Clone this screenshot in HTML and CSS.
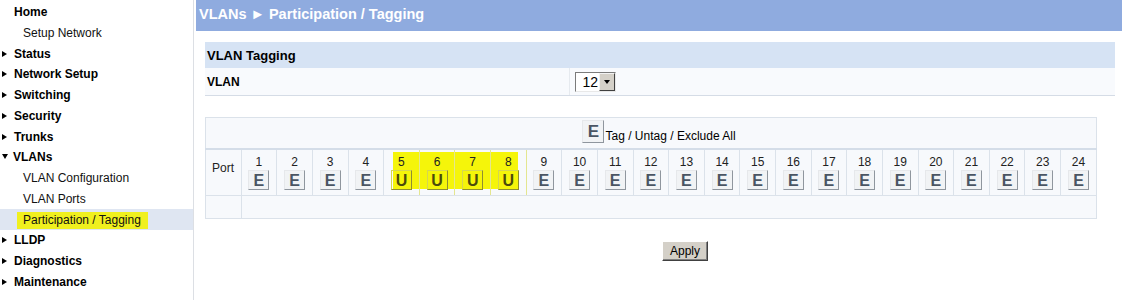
FILE: index.html
```html
<!DOCTYPE html>
<html lang="en">
<head>
  <meta charset="UTF-8" />
  <title>VLANs - Participation / Tagging</title>
  <link rel="stylesheet" href="styles.css">
</head>
<body>
  <div class="page">
    <div class="sidebar">
      <ul class="menu">
        <li class="top">Home</li>
        <li class="sub">Setup Network</li>
        <li class="top arrow">Status</li>
        <li class="top arrow">Network Setup</li>
        <li class="top arrow">Switching</li>
        <li class="top arrow">Security</li>
        <li class="top arrow">Trunks</li>
        <li class="top arrow open">VLANs</li>
        <li class="sub">VLAN Configuration</li>
        <li class="sub">VLAN Ports</li>
        <li class="sub current"><span class="marker">Participation / Tagging</span></li>
        <li class="top arrow">LLDP</li>
        <li class="top arrow">Diagnostics</li>
        <li class="top arrow">Maintenance</li>
      </ul>
    </div>
    <div class="main">
      <div class="titlebar">VLANs &#9658; Participation / Tagging</div>
      <div class="content">
        <table class="box">
          <tr><th colspan="2">VLAN Tagging</th></tr>
          <tr>
            <td class="label">VLAN</td>
            <td><span class="select"><span class="val">12</span><span class="drop"></span></span></td>
          </tr>
        </table>

        <table class="ports">
          <tr class="all">
            <td colspan="25"><span class="tb big">E</span> Tag / Untag / Exclude All</td>
          </tr>
          <tr class="row" id="portRow">
            <td class="port-label">Port</td>
          </tr>
          <tr class="empty"><td></td><td colspan="24"></td></tr>
        </table>

        <div class="actions"><button class="apply">Apply</button></div>
      </div>
    </div>
  </div>

  <script>
  const row = document.getElementById('portRow');
  for (let i = 1; i <= 24; i++) {
    const td = document.createElement('td');
    const untagged = i >= 5 && i <= 8;
    td.className = 'port' + (untagged ? ' hl' : '') + (i === 5 ? ' hl-first' : '') + (i === 8 ? ' hl-last' : '');
    td.innerHTML = `<div class="num">${i}</div><span class="tb${untagged ? ' u' : ''}">${untagged ? 'U' : 'E'}</span>`;
    row.appendChild(td);
  }
  </script>
</body>
</html>
```

FILE: styles.css
```css
body { margin: 0; font-family: "Liberation Sans", Arial, sans-serif; font-size: 12px; color: #000; background: #fff; }
.page { display: flex; min-height: 300px; }

.sidebar { width: 193px; flex: none; border-right: 1px solid #dcdfe4; }
.menu { list-style: none; margin: 0; padding: 2px 0 0; }
.menu li { height: 20.75px; line-height: 20.75px; white-space: nowrap; }
.menu .top { font-weight: bold; padding-left: 14px; }
.menu .sub { padding-left: 23px; color: #111; }
.menu .arrow { padding-left: 2px; }
.menu .arrow::before {
  content: "";
  display: inline-block;
  width: 0;
  height: 0;
  margin-right: 7px;
  vertical-align: 1px;
  border-left: 5px solid #000;
  border-top: 3.5px solid transparent;
  border-bottom: 3.5px solid transparent;
}
.menu .open::before {
  border-left: 3.5px solid transparent;
  border-right: 3.5px solid transparent;
  border-top: 5px solid #000;
  border-bottom: 0;
  margin-right: 5px;
  vertical-align: 2px;
}
.menu .current { background: #dfe6f2; margin-top: -1px; padding-top: 1px; }
.marker { display: inline-block; height: 17px; line-height: 17px; padding: 0 7px 0 6px; margin-left: -6px; background: #f0f01e; vertical-align: middle; }

.main { flex: 1; }
.titlebar { margin-left: 2px; height: 31px; line-height: 29px; padding-left: 3px; background: #8fabdf; color: #fff; font-weight: bold; font-size: 14.5px; }
.content { padding: 11px 0 0 11px; }

.box { width: 910px; border-collapse: collapse; }
.box th { height: 26px; padding: 0 2px; text-align: left; font-size: 13px; background: #d6e3f4; }
.box td { height: 27px; padding: 0 2px; background: #f8fafd; border-bottom: 1px solid #d5dce6; }
.box .label { width: 360px; font-weight: bold; border-right: 1px solid #e6eaef; }

.select { display: inline-flex; height: 18px; margin-left: 3px; vertical-align: middle; border: 1px solid; border-color: #7b7b7b #e8e8e8 #e8e8e8 #7b7b7b; background: #fff; }
.select .val { width: 22px; padding-right: 1px; text-align: right; font-size: 14px; line-height: 18px; }
.select .drop { width: 14px; display: flex; align-items: center; justify-content: center; background: #d4d0c8; border: 1px solid; border-color: #f2f2f2 #404040 #404040 #f2f2f2; }
.select .drop::after { content: ""; border-top: 4px solid #000; border-left: 3.5px solid transparent; border-right: 3.5px solid transparent; }

.ports { width: 892px; margin-top: 21px; border-collapse: collapse; table-layout: fixed; }
.ports td { border: 1px solid #dbe2ea; background: #f7f9fc; text-align: center; padding: 0; }
.ports .all td { height: 25px; border-bottom: 2px solid #d4dde8; padding: 0 0 5px 16px; vertical-align: bottom; line-height: 14px; }
.ports .port-label { width: 35px; text-align: left; padding: 0 0 10px 6px; color: #222; }
.ports .row td { height: 35px; }
.ports .port { padding: 4px 0 4px; color: #222; }
.ports .empty td { height: 22px; }
.num { line-height: 14px; margin-bottom: 1px; }

.tb { display: inline-block; width: 19px; height: 18px; line-height: 19px; border: 1px solid; border-color: #e6e8eb #8f969e #8f969e #e6e8eb; background: #f1f3f5; color: #4a5563; font-weight: bold; font-size: 16px; text-align: center; vertical-align: bottom; }
.tb.big { width: 20px; height: 21px; line-height: 22px; font-size: 17px; margin-right: -2px; }
.tb.u { background: transparent; color: #4b4a0c; border-color: #d6d650 #8e8e30 #8e8e30 #d6d650; }

.ports .hl { background: #f7f9fc linear-gradient(#f5f50a, #f5f50a) no-repeat 0 2px / 100% 37px; border-left-color: #e4e690; border-right-color: #e4e690; }
.ports .hl-first { background-position: right 2px; background-size: calc(100% - 9px) 37px; }
.ports .hl-last { background-size: calc(100% - 8px) 37px; }

.actions { margin-top: 22px; padding-left: 457px; }
.apply { width: 46px; height: 20px; padding: 0; font: 12px "Liberation Sans", Arial, sans-serif; color: #000; background: #d4d0c8; border: 1px solid; border-color: #fff #404040 #404040 #fff; box-shadow: inset -1px -1px #808080; }
```
